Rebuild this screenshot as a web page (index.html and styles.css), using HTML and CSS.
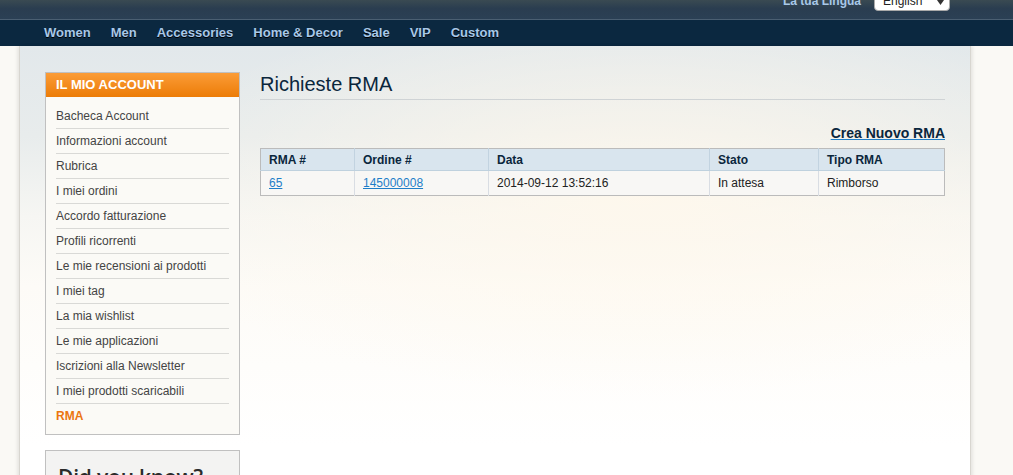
FILE: index.html
```html
<!DOCTYPE html>
<html lang="it">
<head>
<meta charset="utf-8">
<title>Richieste RMA</title>
<link rel="stylesheet" href="styles.css">
</head>
<body>
<header class="header">
  <div class="topbar">
    <div class="lang">
      <span class="lang-label">La tua Lingua</span>
      <span class="lang-select">English <svg class="arrow" width="7" height="8" viewBox="0 0 7 8"><path d="M0 3 L7 3 L3.5 8 Z" fill="#333"/></svg></span>
    </div>
  </div>
  <nav class="nav">
    <a href="#">Women</a>
    <a href="#">Men</a>
    <a href="#">Accessories</a>
    <a href="#">Home &amp; Decor</a>
    <a href="#">Sale</a>
    <a href="#">VIP</a>
    <a href="#">Custom</a>
  </nav>
</header>
<div class="page">
  <div class="container">
    <aside class="sidebar">
      <div class="block account">
        <div class="block-title">IL MIO ACCOUNT</div>
        <ul class="menu">
          <li><a href="#">Bacheca Account</a></li>
          <li><a href="#">Informazioni account</a></li>
          <li><a href="#">Rubrica</a></li>
          <li><a href="#">I miei ordini</a></li>
          <li><a href="#">Accordo fatturazione</a></li>
          <li><a href="#">Profili ricorrenti</a></li>
          <li><a href="#">Le mie recensioni ai prodotti</a></li>
          <li><a href="#">I miei tag</a></li>
          <li><a href="#">La mia wishlist</a></li>
          <li><a href="#">Le mie applicazioni</a></li>
          <li><a href="#">Iscrizioni alla Newsletter</a></li>
          <li><a href="#">I miei prodotti scaricabili</a></li>
          <li class="current">RMA</li>
        </ul>
      </div>
      <div class="block know">
        <h3>Did you know?</h3>
      </div>
    </aside>
    <main class="main">
      <h1 class="title">Richieste RMA</h1>
      <div class="actions"><a href="#" class="new-link">Crea Nuovo RMA</a></div>
      <table class="grid">
        <thead>
          <tr>
            <th class="c1">RMA #</th>
            <th class="c2">Ordine #</th>
            <th class="c3">Data</th>
            <th class="c4">Stato</th>
            <th class="c5">Tipo RMA</th>
          </tr>
        </thead>
        <tbody>
          <tr>
            <td><a href="#">65</a></td>
            <td><a href="#">145000008</a></td>
            <td>2014-09-12 13:52:16</td>
            <td>In attesa</td>
            <td>Rimborso</td>
          </tr>
        </tbody>
      </table>
    </main>
  </div>
</div>
</body>
</html>
```

FILE: styles.css
```css
html, body {
  margin: 0;
  padding: 0;
}
body {
  background: #faf9f5;
  font-family: "Liberation Sans", Arial, sans-serif;
  font-size: 12px;
  color: #444;
  height: 475px;
  overflow: hidden;
}
a { color: #1e7ec8; }

.header {
  background: #0b2840;
}
.topbar {
  height: 19px;
  border-bottom: 1px solid #4b5f72;
  background: linear-gradient(to bottom, #3a4a52 0%, #2a3d50 45%, #2b4055 100%);
  display: flex;
  justify-content: flex-end;
  padding-right: 63px;
  overflow: hidden;
}
.lang {
  display: flex;
  align-items: center;
  gap: 13px;
  margin-top: -13px;
  height: 28px;
}
.lang-label {
  font-weight: bold;
  font-size: 12px;
  color: #a8c8e8;
}
.lang-select {
  display: flex;
  align-items: center;
  justify-content: space-between;
  box-sizing: border-box;
  width: 76px;
  height: 19px;
  background: #fff;
  border-radius: 4px;
  border: 1px solid #aaa;
  padding: 0 5px 0 8px;
  font-size: 12px;
  color: #222;
}
.nav {
  height: 25px;
  padding-bottom: 1px;
  display: flex;
  align-items: center;
  gap: 20px;
  padding-left: 44px;
  background: #0b2840;
}
.nav a {
  color: #a8c8e8;
  text-decoration: none;
  font-weight: bold;
  font-size: 13px;
  text-shadow: 0 1px 0 #000;
}

.page {
  padding: 0 43px 0 20px;
}
.container {
  width: 950px;
  min-height: 429px;
  box-sizing: border-box;
  display: flex;
  gap: 20px;
  padding: 26px 25px 0 25px;
  background:
    radial-gradient(ellipse 520px 200px at 620px 150px, rgba(255,248,236,0.9), rgba(255,250,240,0) 100%),
    linear-gradient(to bottom, #e2e8eb 0px, #e8ecec 90px, #f6f6f3 170px, #fdfbf7 240px, #ffffff 400px);
  box-shadow: -1px 0 0 #d8d6d0, -3px 0 3px rgba(0,0,0,0.08), 1px 0 0 #d8d6d0, 3px 0 3px rgba(0,0,0,0.08);
}

.sidebar {
  width: 195px;
  flex: none;
  display: flex;
  flex-direction: column;
  gap: 15px;
}
.block {
  border: 1px solid #c0c0c0;
  box-sizing: border-box;
}
.block-title {
  height: 24px;
  line-height: 24px;
  padding-left: 10px;
  background: linear-gradient(to bottom, #fb9c37, #ec7c07);
  color: #fff;
  font-weight: bold;
  font-size: 13px;
}
.account {
  background: #fbfaf6;
}
.menu {
  list-style: none;
  margin: 0;
  padding: 7px 10px 6px 10px;
}
.menu li {
  height: 24px;
  line-height: 24px;
  border-top: 1px solid #d9d9d6;
  font-size: 12px;
}
.menu li:first-child {
  border-top: none;
}
.menu li a {
  color: #444;
  text-decoration: none;
}
.menu li.current {
  color: #eb750f;
  font-weight: bold;
}
.know {
  background: #f3f3f2;
  height: 40px;
  padding: 12px 0 0 12px;
}
.know h3 {
  margin: 0;
  font-family: "Open Sans", "Liberation Sans", sans-serif;
  font-weight: 600;
  font-size: 21px;
  color: #2b2b2b;
  letter-spacing: -0.2px;
}

.main {
  flex: 1;
  min-width: 0;
}
.title {
  margin: 0;
  font-weight: normal;
  font-size: 20px;
  line-height: 24px;
  color: #0a263c;
  padding-bottom: 3px;
  border-bottom: 1px solid #cfd3d5;
}
.actions {
  text-align: right;
  margin-top: 25px;
  height: 20px;
}
.new-link {
  font-weight: bold;
  font-size: 14px;
  color: #0a263c;
  text-decoration: underline;
  text-decoration-color: #1e7ec8;
}
.grid {
  width: 100%;
  border-collapse: collapse;
  border: 1px solid #bbbbbb;
  margin-top: 3px;
}
.grid th {
  background: #d9e5ee;
  color: #0a263c;
  font-weight: bold;
  font-size: 12px;
  text-align: left;
  height: 21px;
  padding: 0 8px;
  border-left: 1px solid #c2d3e0;
  border-bottom: 1px solid #bfd1de;
}
.grid td {
  background: #f8f7f5;
  color: #222;
  font-size: 12px;
  height: 24px;
  padding: 0 8px;
  border-left: 1px solid #d9dde3;
}
.grid th:first-child, .grid td:first-child { border-left: none; }
.c1 { width: 77px; }
.c2 { width: 117px; }
.c3 { width: 204px; }
.c4 { width: 92px; }
```
